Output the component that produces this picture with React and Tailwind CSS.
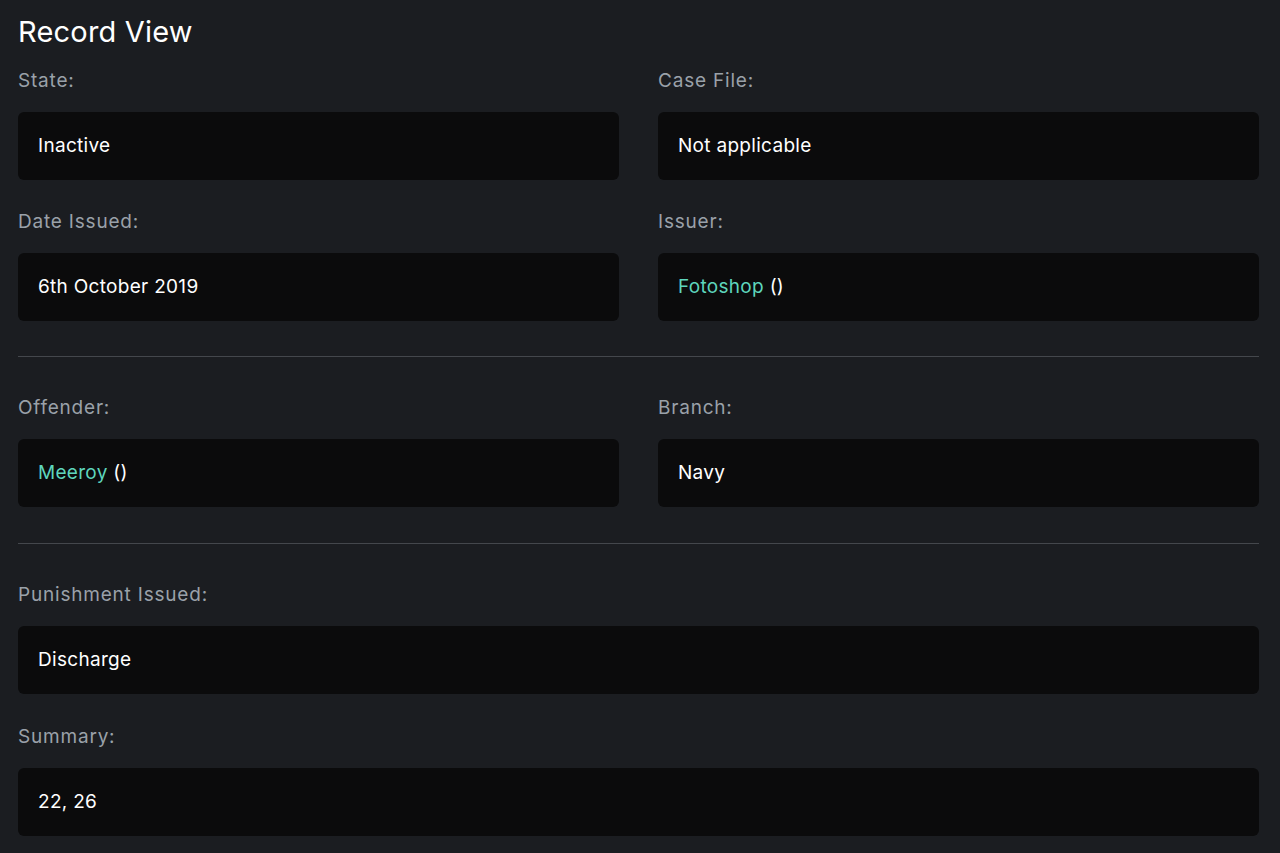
import React from "react";

const Label = ({ children }) => (
  <div className="pt-[1px] text-[19px] leading-[23px] text-[#9aa1a9] tracking-[0.8px]">{children}</div>
);

const Box = ({ children }) => (
  <div className="mt-[20px] h-[68px] rounded-[6px] bg-[#0b0b0c] px-[20px] flex items-center text-[19px] tracking-[0.3px] text-white">
    {children}
  </div>
);

const Field = ({ label, children }) => (
  <div>
    <Label>{label}</Label>
    <Box>{children}</Box>
  </div>
);

const Link = ({ children }) => <span className="text-[#5ed6bd]">{children}</span>;

export default function App() {
  return (
    <div
      className="min-h-[853px] w-full bg-[#1b1d21] pl-[18px] pr-[21px]"
      style={{ fontFamily: "Inter, 'Noto Sans', sans-serif" }}
    >
      <div className="pt-[14px] text-[29px] leading-[36px] tracking-[0.2px] text-white">Record View</div>
      <div className="mt-[18px] grid grid-cols-2 gap-x-[39px] gap-y-[29px]">
        <Field label="State:">Inactive</Field>
        <Field label="Case File:">Not applicable</Field>
        <Field label="Date Issued:">6th October 2019</Field>
        <Field label="Issuer:">
          <Link>Fotoshop</Link>&nbsp;()
        </Field>
      </div>
      <div className="mt-[35px] h-[1px] bg-[#44474c]" />
      <div className="mt-[38px] grid grid-cols-2 gap-x-[39px]">
        <Field label="Offender:">
          <Link>Meeroy</Link>&nbsp;()
        </Field>
        <Field label="Branch:">Navy</Field>
      </div>
      <div className="mt-[36px] h-[1px] bg-[#44474c]" />
      <div className="mt-[38px] flex flex-col gap-[30px]">
        <Field label="Punishment Issued:">Discharge</Field>
        <Field label="Summary:">22, 26</Field>
      </div>
    </div>
  );
}
